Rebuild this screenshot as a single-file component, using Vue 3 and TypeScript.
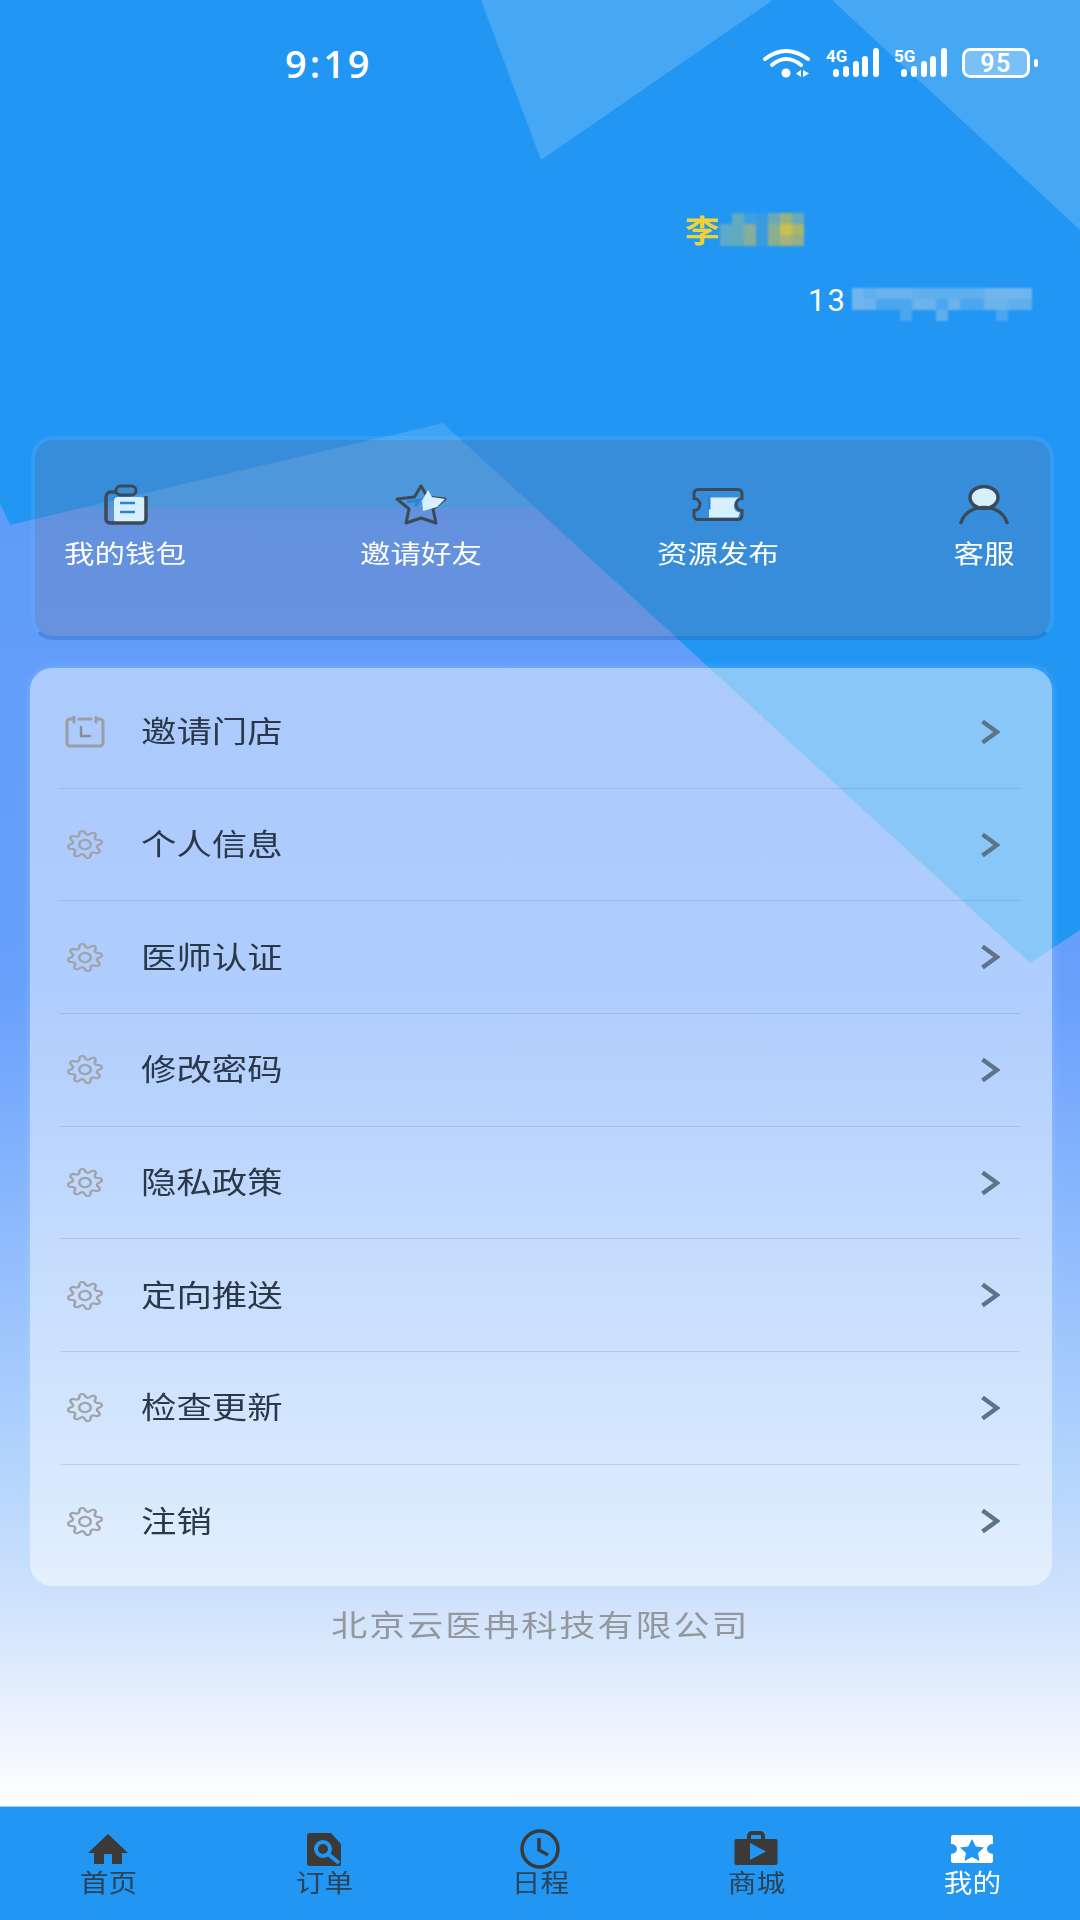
<script setup lang="ts">
interface Action { label: string; icon: 'wallet' | 'star' | 'ticket' | 'person' }
interface Tab { label: string; icon: 'home' | 'order' | 'clock' | 'shop' | 'mine'; active?: boolean }

const actions: Action[] = [
  { label: '我的钱包', icon: 'wallet' },
  { label: '邀请好友', icon: 'star' },
  { label: '资源发布', icon: 'ticket' },
  { label: '客服', icon: 'person' },
]

const menu = ['邀请门店', '个人信息', '医师认证', '修改密码', '隐私政策', '定向推送', '检查更新', '注销']

const tabs: Tab[] = [
  { label: '首页', icon: 'home' },
  { label: '订单', icon: 'order' },
  { label: '日程', icon: 'clock' },
  { label: '商城', icon: 'shop' },
  { label: '我的', icon: 'mine', active: true },
]

// the two censored blocks in the header
const nameMosaic = [
  '#2196f3', '#62aabf', '#3b9ee6', '#3a9ae0', '#6ca8b8', '#98b27e', '#6aa8c0',
  '#5fa8c8', '#62aabb', '#86ae9a', '#3a9ae0', '#88b090', '#c8c050', '#a8b470',
  '#5fa8c8', '#62aabb', '#86ae9a', '#3a9ae0', '#88b090', '#a6b47a', '#96ae8a',
]
const phoneLevels = [
  '432223333334444',
  '421112212112233',
  '000010030000100',
]
const phoneColors = ['#2196f3', '#4aa6ef', '#6bb3ec', '#5fafed', '#70b5ee']
const phoneMosaic = phoneLevels.flatMap(r => [...r].map(c => phoneColors[Number(c)]!))

// gear outline: rounded lobes, sampled around the circle
function gearPath(): string {
  const pts: string[] = []
  for (let i = 0; i < 96; i++) {
    const a = (i / 96) * Math.PI * 2
    const w = Math.cos(8 * a + Math.PI / 2)
    const r = 11.4 + 1.9 * Math.sign(w) * Math.pow(Math.abs(w), 0.6)
    pts.push(`${(14 + r * Math.cos(a)).toFixed(2)} ${(14 + r * Math.sin(a)).toFixed(2)}`)
  }
  return `M${pts.join('L')}Z`
}
const gear = gearPath()
</script>

<template>
  <div class="page">
    <svg class="bg" width="1080" height="1920" viewBox="0 0 1080 1920">
      <defs>
        <linearGradient id="wash" gradientUnits="userSpaceOnUse" x1="0" y1="400" x2="0" y2="1806">
          <stop offset="0" stop-color="#40a4f4" />
          <stop offset="0.0768" stop-color="#40a4f4" />
          <stop offset="0.0769" stop-color="#5e9cf8" />
          <stop offset="0.42" stop-color="#68a0fc" />
          <stop offset="0.768" stop-color="#b5d6fd" />
          <stop offset="0.87" stop-color="#d4e5fc" />
          <stop offset="1" stop-color="#ffffff" />
        </linearGradient>
      </defs>
      <rect width="1080" height="1920" fill="url(#wash)" />
      <polygon points="0,0 1080,0 1080,930 1030,963 443,423 10,525 0,503" fill="#2196f3" />
      <polygon points="481,0 541,160 773,0" fill="#fff" fill-opacity="0.17" />
      <polygon points="832,0 1080,230 1080,0" fill="#fff" fill-opacity="0.17" />
    </svg>

    <div class="status">
      <span class="time">9:19</span>
      <div class="status-icons">
        <svg width="48" height="30" viewBox="0 0 48 30">
          <g fill="none" stroke="#fff" stroke-width="4" stroke-linecap="round">
            <path d="M2 11Q23 -5 45 11" />
            <path d="M9 17Q23 5 38 17" />
          </g>
          <circle cx="23" cy="25" r="4.500" fill="#fff" />
          <path d="M38 22v7l-5-3.500zM40 22v7l6-3.500z" fill="#fff" />
        </svg>
        <svg v-for="n in ['4G', '5G']" :key="n" class="cell" width="53" height="38" viewBox="0 -8 53 38">
          <text x="0" y="14" class="net">{{ n }}</text>
          <g fill="#fff">
            <rect x="7" y="21" width="6" height="8" rx="3" />
            <rect x="17" y="18" width="6" height="11" rx="3" />
            <rect x="27" y="13" width="6" height="16" rx="3" />
            <rect x="36" y="8" width="6" height="21" rx="3" />
            <rect x="47" y="0" width="6" height="29" rx="3" />
          </g>
        </svg>
        <svg width="76" height="30" viewBox="0 0 76 30">
          <rect x="1.500" y="1.500" width="65" height="27" rx="7" fill="#fff" fill-opacity="0.28" stroke="#fff" stroke-width="3" />
          <rect x="72" y="11" width="4" height="8" rx="2" fill="#fff" />
          <text x="34" y="24" text-anchor="middle" class="batt">95</text>
        </svg>
      </div>
    </div>

    <div class="profile">
      <div class="name">
        <span class="name-first">李</span>
        <div class="mosaic mosaic-name">
          <i v-for="(c, i) in nameMosaic" :key="i" :style="{ background: c }" />
        </div>
      </div>
      <div class="phone">
        <span class="phone-start">13</span>
        <div class="mosaic mosaic-phone">
          <i v-for="(c, i) in phoneMosaic" :key="i" :style="{ background: c }" />
        </div>
      </div>
    </div>

    <div class="actions">
      <div v-for="a in actions" :key="a.label" class="action" :class="{ short: a.label.length === 2 }">
        <svg v-if="a.icon === 'wallet'" width="46" height="41" viewBox="-2 0 46 41">
          <rect x="10" y="13" width="31" height="26" rx="4" fill="#d6f0ff" />
          <path d="M12 8H7a5 5 0 0 0-5 5v22a4 4 0 0 0 4 4h32a4 4 0 0 0 4-4V12" fill="none" stroke="#3c4a58" stroke-width="3.500" />
          <rect x="12" y="2" width="20" height="9" rx="4.500" fill="none" stroke="#3c4a58" stroke-width="3" />
          <path d="M16 19h15M16 28h15" stroke="#2a83d6" stroke-width="2.500" />
        </svg>
        <svg v-else-if="a.icon === 'star'" width="52" height="41" viewBox="0 0 52 41">
          <path d="M26 2l6.500 11L50 15 38 25l3 14-15-5-15 5 3-14L2 15l17.500-2z" fill="none" stroke="#3c4a58" stroke-width="3" stroke-linejoin="round" />
          <path d="M12 18l12-2-4 6" fill="none" stroke="#2a83d6" stroke-width="3" />
          <path d="M33 6L37 13 50 15 42 23 28 27 27 17z" fill="#d6f0ff" />
        </svg>
        <svg v-else-if="a.icon === 'ticket'" width="52" height="34" viewBox="0 0 52 34">
          <path d="M17 10h31v3a6 6 0 0 0 0 12l-2 5H17z" fill="#d6f0ff" />
          <path d="M6 2h40a4 4 0 0 1 4 4v5a6 6 0 0 0 0 12v5a4 4 0 0 1-4 4H6a4 4 0 0 1-4-4v-5a6 6 0 0 0 0-12V6a4 4 0 0 1 4-4z" fill="none" stroke="#3c4a58" stroke-width="3" />
          <path d="M17 8v14" stroke="#2a83d6" stroke-width="3" />
        </svg>
        <svg v-else width="50" height="40" viewBox="0 0 50 40">
          <ellipse cx="25" cy="13" rx="14" ry="11" fill="#d6f0ff" stroke="#3c4a58" stroke-width="3.500" />
          <path d="M2 38c3-9 11-15 23-15s20 6 23 15" fill="none" stroke="#3c4a58" stroke-width="3.500" stroke-linecap="round" />
          <path d="M25 26v12" stroke="#2a8fe6" stroke-width="2" />
        </svg>
        <div class="action-label"><span>{{ a.label }}</span></div>
      </div>
    </div>

    <div class="menu">
      <div v-for="(m, i) in menu" :key="m" class="row">
        <svg v-if="i === 0" class="row-icon" width="40" height="32" viewBox="0 0 40 32">
          <path d="M8 3H5a3 3 0 0 0-3 3v21a3 3 0 0 0 3 3h30a3 3 0 0 0 3-3V6a3 3 0 0 0-3-3h-3M14 3h12M9 1v5M31 1v5" fill="none" stroke="#9a9da3" stroke-width="3" stroke-linecap="round" />
          <path d="M16 11v9h9" fill="none" stroke="#8a8d93" stroke-width="2.500" stroke-linecap="round" />
        </svg>
        <svg v-else class="row-icon gear" width="36" height="29" viewBox="0 0 28 28" preserveAspectRatio="none">
          <path :d="gear" fill="none" stroke="#a0a3a8" stroke-width="2" stroke-linejoin="round" />
          <circle cx="14" cy="14" r="4.500" fill="none" stroke="#a0a3a8" stroke-width="2" />
        </svg>
        <span class="row-label">{{ m }}</span>
        <svg class="chevron" width="20" height="26" viewBox="0 0 20 26">
          <path d="M2.500 2.500L17 13 2.500 23.500" fill="none" stroke="#5d7386" stroke-width="4.500" />
        </svg>
      </div>
    </div>

    <div class="company"><span>北京云医冉科技有限公司</span></div>

    <div class="tabbar">
      <div v-for="t in tabs" :key="t.label" class="tab" :class="{ active: t.active }">
        <svg width="46" height="36" viewBox="0 0 46 36">
          <template v-if="t.icon === 'home'">
            <path d="M23 3L43 22H37V33H27V23H19V33H9V22H3z" fill="#3b3a38" />
          </template>
          <template v-else-if="t.icon === 'order'">
            <path d="M9 2H30L40 13V33a2 2 0 0 1-2 2H9a3 3 0 0 1-3-3V5a3 3 0 0 1 3-3z" fill="#3b3a38" />
            <circle cx="22" cy="18" r="7" fill="none" stroke="#2196f3" stroke-width="4" />
            <path d="M27 23l11 9" stroke="#2196f3" stroke-width="4" />
          </template>
          <template v-else-if="t.icon === 'clock'">
            <circle cx="23" cy="18" r="18" fill="none" stroke="#3b3a38" stroke-width="3.500" />
            <path d="M22 7v12l9 5" fill="none" stroke="#3b3a38" stroke-width="3.500" />
          </template>
          <template v-else-if="t.icon === 'shop'">
            <path d="M16 8V5a3 3 0 0 1 3-3h8a3 3 0 0 1 3 3v3" fill="none" stroke="#3b3a38" stroke-width="4" />
            <rect x="1.500" y="8" width="43" height="26" rx="2" fill="#3b3a38" />
            <path d="M17 12L33 20.500 17 29z" fill="#2196f3" />
          </template>
          <template v-else>
            <path d="M4 4H42a2 2 0 0 1 2 2v7a6 5 0 0 0 0 10v7a2 2 0 0 1-2 2H4a2 2 0 0 1-2-2v-7a6 5 0 0 0 0-10V6a2 2 0 0 1 2-2z" fill="#fff" />
            <path d="M23 8l3.800 7.500 8.200 1-6 5.500 1.500 8-7.500-4-7.500 4 1.500-8-6-5.500 8.200-1z" fill="#2196f3" />
          </template>
        </svg>
        <div class="tab-label">{{ t.label }}</div>
      </div>
    </div>
  </div>
</template>

<style scoped>
.page {
  position: relative;
  width: 1080px;
  height: 1920px;
  overflow: hidden;
  display: flex;
  flex-direction: column;
  font-family: "Noto Sans CJK SC", "Noto Sans", sans-serif;
}
.bg { position: absolute; left: 0; top: 0; }
.status, .profile, .actions, .menu, .company, .tabbar { position: relative; }

.status {
  height: 126px;
  display: flex;
  align-items: center;
  justify-content: space-between;
  padding: 0 42px 0 285px;
  box-sizing: border-box;
}
.time {
  font-family: "Open Sans", sans-serif;
  font-size: 38px;
  font-weight: 600;
  letter-spacing: 3px;
  color: #fff;
}
.status-icons { display: flex; align-items: center; gap: 15px; }
.status-icons svg { display: block; }
.status-icons .cell { margin-top: -8px; }
.net { font-family: Roboto, sans-serif; font-size: 17px; font-weight: 700; fill: #fff; }
.batt { font-family: Roboto, sans-serif; font-size: 25px; font-weight: 600; letter-spacing: 1.500px; fill: #fff; }

.profile {
  height: 310px;
  box-sizing: border-box;
  padding-top: 86px;
}
.name { display: flex; margin-left: 685px; height: 34px; align-items: center; }
.name-first {
  width: 35px;
  font-size: 31px;
  font-weight: 700;
  line-height: 34px;
  color: #efd238;
  transform: scaleX(1.12);
  transform-origin: left center;
}
.phone { display: flex; margin: 42px 0 0 808px; align-items: flex-start; }
.phone-start {
  width: 44px;
  font-family: Roboto, sans-serif;
  font-size: 31px;
  line-height: 26px;
  color: #fff;
  letter-spacing: 2px;
}
.mosaic { display: grid; filter: blur(1px); }
.mosaic i { display: block; }
.mosaic-name { grid-template-columns: repeat(7, 12px); grid-auto-rows: 11px; }
.mosaic-phone { grid-template-columns: repeat(15, 12px); grid-auto-rows: 11px; }

.actions {
  margin-left: 31px;
  width: 1023px;
  height: 204px;
  box-sizing: border-box;
  display: flex;
  justify-content: space-between;
  align-items: flex-start;
  padding: 44px 36px 0 30px;
  border: 4px solid rgba(110, 180, 250, 0.25);
  border-bottom-color: rgba(30, 90, 170, 0.3);
  border-radius: 22px;
  background: rgba(120, 120, 155, 0.28);
  background-clip: padding-box;
}
.action {
  width: 120px;
  height: 100px;
  display: flex;
  flex-direction: column;
  align-items: center;
}
.action.short { width: 60px; }
.action svg { display: block; height: 41px; }
.action-label {
  margin-top: 9px;
  height: 36px;
  text-align: center;
  font-size: 25px;
  line-height: 36px;
  color: #fff;
  white-space: nowrap;
}
.action-label span { display: inline-block; transform: scaleX(1.22); }

.menu {
  margin: 28px 0 0 30px;
  width: 1022px;
  height: 918px;
  box-sizing: border-box;
  padding: 8px 32px 0 30px;
  border-radius: 22px;
  background: rgba(255, 255, 255, 0.47);
  box-shadow: 0 0 10px rgba(200, 225, 255, 0.3);
}
.row {
  height: 112.700px;
  box-sizing: border-box;
  display: flex;
  align-items: center;
  border-bottom: 1px solid rgba(80, 110, 150, 0.2);
  padding-left: 5px;
}
.row:last-child { border-bottom: none; }
.row-icon { flex: none; width: 40px; display: block; }
.row-icon.gear { width: 36px; margin: 0 2px; }
.row-label {
  margin: -5px 0 0 36px;
  font-size: 29.500px;
  line-height: 40px;
  color: #2a3848;
  transform: scaleX(1.2);
  transform-origin: left center;
}
.chevron { margin-left: auto; margin-right: 20px; display: block; }

.company {
  margin-top: 15px;
  height: 44px;
  text-align: center;
  font-size: 30px;
  line-height: 44px;
  color: #94989d;
  letter-spacing: 1.700px;
}
.company span { display: inline-block; transform: scaleX(1.2); }

.tabbar {
  margin-top: auto;
  height: 114px;
  display: grid;
  grid-template-columns: repeat(5, 1fr);
  background: #2196f3;
  border-top: 1px solid #9dd0f5;
  box-sizing: border-box;
  padding-top: 24px;
}
.tab { display: flex; flex-direction: column; align-items: center; }
.tab svg { display: block; overflow: visible; }
.tab-label {
  font-size: 24.500px;
  line-height: 30px;
  margin-top: 0;
  color: #2c4256;
  transform: scaleX(1.17);
}
.tab.active .tab-label { color: #fff; }
</style>
